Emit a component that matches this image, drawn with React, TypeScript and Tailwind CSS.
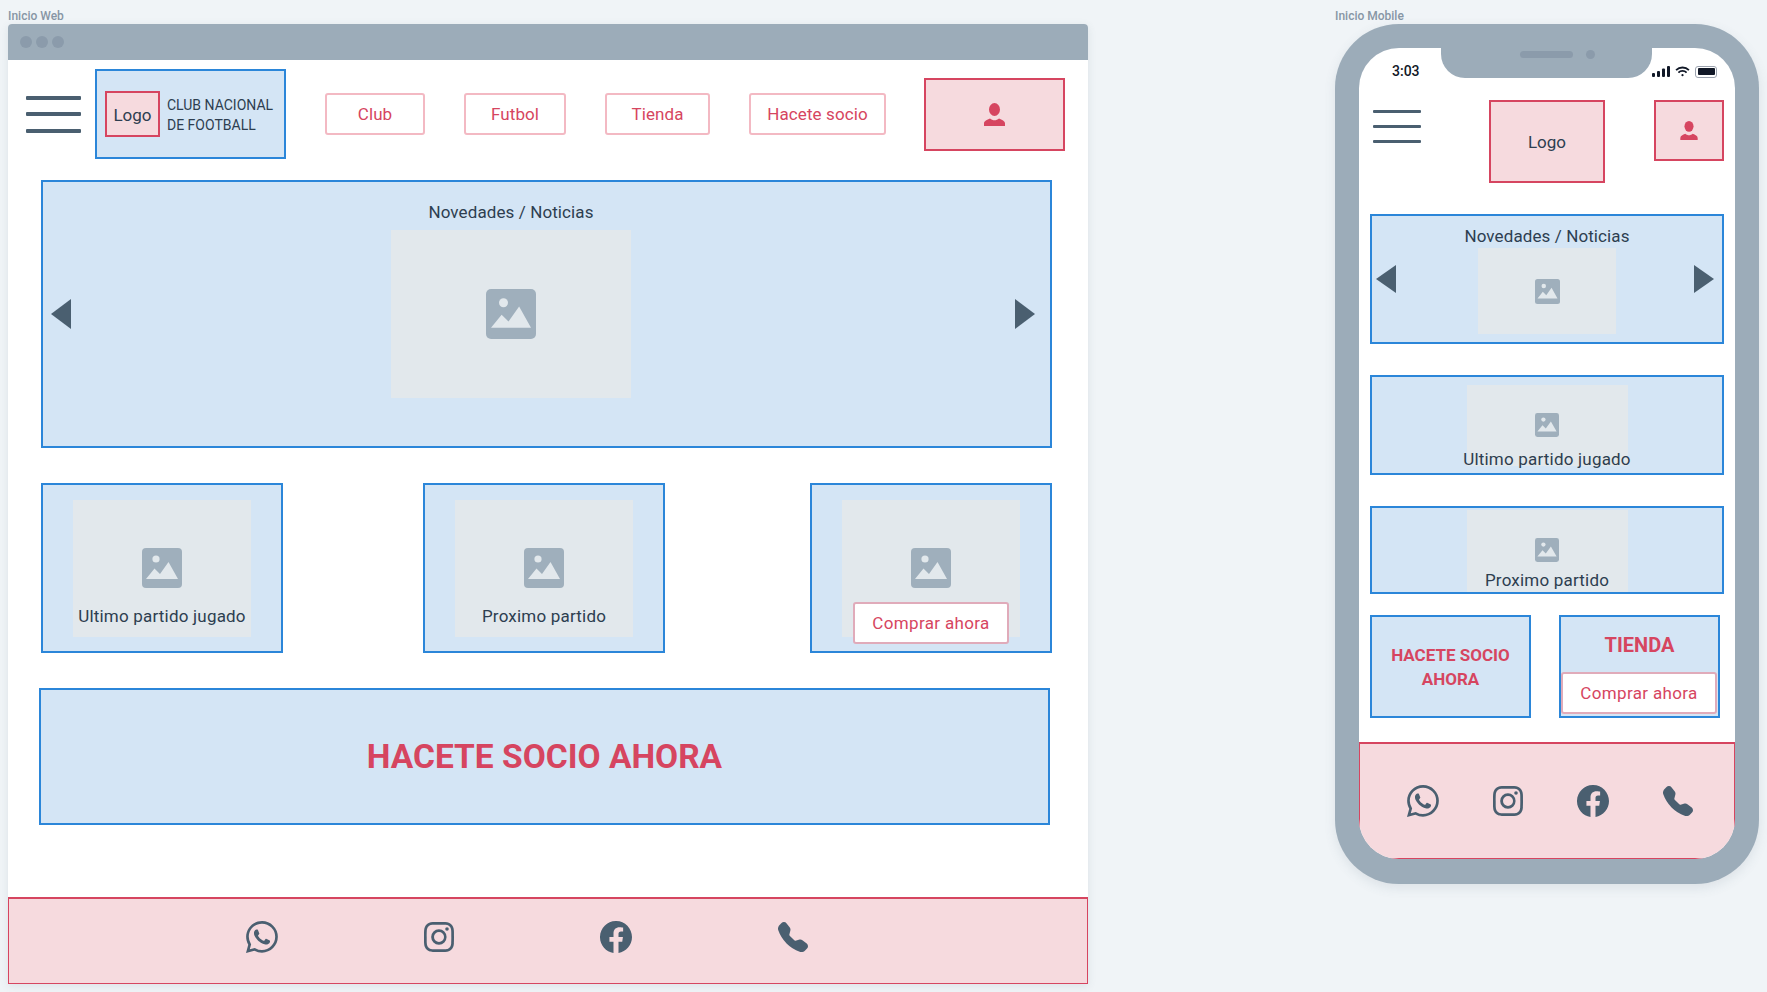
import type { ReactNode } from 'react';
import { BsWhatsapp, BsInstagram, BsFacebook, BsTelephoneFill } from 'react-icons/bs';

function ImageIcon({ className }: { className: string }) {
  return (
    <svg viewBox="0 0 40 40" className={`shrink-0 ${className}`}>
      <rect width="40" height="40" rx="4" fill="#9fafbc" />
      <circle cx="14" cy="11" r="3.6" fill="#e2e8ec" />
      <path d="M4 31l8.500-10.500 5.500 5.500 8.500-12 9.500 17z" fill="#e2e8ec" />
    </svg>
  );
}

function UserIcon({ className }: { className: string }) {
  return (
    <svg viewBox="0 0 21 23" className={className} fill="#d64560">
      <ellipse cx="10.500" cy="6.500" rx="5.500" ry="6.500" />
      <path d="M0 23v-2.500c0-2.500 3-3.700 6-5 1.300 1.200 3 1.800 4.500 1.800s3.200-.6 4.500-1.800c3 1.300 6 2.500 6 5V23z" />
    </svg>
  );
}

function Burger({ className, bar }: { className: string; bar: string }) {
  return (
    <div className={`flex flex-col justify-between ${className}`}>
      <div className={`${bar} bg-[#4a5f70] rounded-[1px]`} />
      <div className={`${bar} bg-[#4a5f70] rounded-[1px]`} />
      <div className={`${bar} bg-[#4a5f70] rounded-[1px]`} />
    </div>
  );
}

function NavButton({ className, children }: { className: string; children: ReactNode }) {
  return (
    <div className={`h-[42px] flex items-center justify-center pt-[2px] bg-white border-2 border-[#f3b9c3] rounded-[3px] text-[17px] tracking-[0.1px] text-[#d64560] ${className}`}>
      {children}
    </div>
  );
}

function BuyButton({ className }: { className: string }) {
  return (
    <div className={`w-[156px] h-[42px] flex items-center justify-center pt-[2px] bg-white border-2 border-[#e0abba] rounded-[3px] text-[17px] tracking-[0.35px] text-[#d64560] ${className}`}>
      Comprar ahora
    </div>
  );
}

function ArrowLeft({ className }: { className: string }) {
  return (
    <svg viewBox="0 0 20 30" className={className} fill="#4a5f70" preserveAspectRatio="none">
      <path d="M20 0v30L0 15z" />
    </svg>
  );
}

function ArrowRight({ className }: { className: string }) {
  return (
    <svg viewBox="0 0 20 30" className={className} fill="#4a5f70" preserveAspectRatio="none">
      <path d="M0 0v30l20-15z" />
    </svg>
  );
}

function SocialIcons({ className }: { className: string }) {
  return (
    <div className={`flex items-center text-[#4a5f70] ${className}`}>
      <div className="w-[32px] h-[32px] flex items-center justify-center">
        <BsWhatsapp className="w-[32px] h-[32px]" />
      </div>
      <div className="w-[32px] h-[32px] flex items-center justify-center">
        <BsInstagram className="w-[30px] h-[30px]" />
      </div>
      <div className="w-[32px] h-[32px] flex items-center justify-center">
        <BsFacebook className="w-[32px] h-[32px]" />
      </div>
      <div className="w-[32px] h-[32px] flex items-center justify-center">
        <BsTelephoneFill className="w-[30px] h-[30px]" />
      </div>
    </div>
  );
}

function WebCard({ className, label, button }: { className: string; label?: string; button?: boolean }) {
  return (
    <div className={`relative w-[242px] h-[170px] bg-[#d4e5f5] border-2 border-[#2b86d9] flex justify-center pt-[15px] ${className}`}>
      <div className="w-[178px] h-[137px] bg-[#e2e8ec] flex flex-col items-center">
        <ImageIcon className="w-[40px] h-[40px] mt-[48px]" />
        {label && <p className="mt-[16px] text-[17px] tracking-[0.2px] leading-[24px] text-[#2d3e50] whitespace-nowrap">{label}</p>}
      </div>
      {button && <BuyButton className="absolute left-[41px] top-[117px]" />}
    </div>
  );
}

function WebFrame() {
  return (
    <section className="w-[1080px] shrink-0 flex flex-col">
      <p className="h-[24px] pt-[9px] text-[12px] font-medium leading-[14px] text-[#8796a5]">Inicio Web</p>
      <div className="h-[960px] flex flex-col bg-white rounded-t-[4px] shadow-[0_2px_8px_rgba(74,95,112,0.12)]">
        <div className="h-[36px] shrink-0 flex items-center gap-[4px] pl-[12px] bg-[#9cacb9] rounded-t-[4px]">
          <span className="w-[12px] h-[12px] rounded-full bg-[#8b9bab]" />
          <span className="w-[12px] h-[12px] rounded-full bg-[#8b9bab]" />
          <span className="w-[12px] h-[12px] rounded-full bg-[#8b9bab]" />
        </div>
        <header className="mt-[9px] h-[90px] flex items-center pl-[18px]">
          <Burger className="w-[55px] h-[37px]" bar="h-[4px]" />
          <div className="ml-[14px] w-[191px] h-[90px] flex items-center bg-[#d4e5f5] border-2 border-[#2b86d9] pl-[8px]">
            <div className="w-[55px] h-[46px] flex items-center justify-center pt-[4px] bg-[#f6dade] border-2 border-[#d64560] text-[17px] text-[#2d3e50]">
              Logo
            </div>
            <p className="ml-[7px] mt-[2px] text-[14px] leading-[20px] text-[#2d3e50] whitespace-nowrap">
              CLUB NACIONAL
              <br />
              DE FOOTBALL
            </p>
          </div>
          <NavButton className="ml-[39px] w-[100px]">Club</NavButton>
          <NavButton className="ml-[39px] w-[102px]">Futbol</NavButton>
          <NavButton className="ml-[39px] w-[105px]">Tienda</NavButton>
          <NavButton className="ml-[39px] w-[137px]">Hacete socio</NavButton>
          <div className="ml-[38px] w-[141px] h-[73px] flex items-center justify-center bg-[#f6dade] border-2 border-[#d64560]">
            <UserIcon className="w-[21px] h-[23px]" />
          </div>
        </header>
        <div className="relative mt-[21px] ml-[33px] w-[1011px] h-[268px] flex items-center justify-between pl-[8px] pr-[15px] bg-[#d4e5f5] border-2 border-[#2b86d9]">
          <ArrowLeft className="w-[20px] h-[30px]" />
          <div className="absolute left-[348px] top-[18px] w-[240px] flex flex-col items-center">
            <p className="text-[17px] tracking-[0.1px] leading-[24px] text-[#2d3e50] whitespace-nowrap">Novedades / Noticias</p>
            <div className="mt-[6px] w-[240px] h-[168px] bg-[#e2e8ec] flex items-center justify-center">
              <ImageIcon className="w-[50px] h-[50px]" />
            </div>
          </div>
          <ArrowRight className="w-[20px] h-[30px]" />
        </div>
        <div className="mt-[35px] ml-[33px] flex">
          <WebCard className="" label="Ultimo partido jugado" />
          <WebCard className="ml-[140px]" label="Proximo partido" />
          <WebCard className="ml-[145px]" button />
        </div>
        <div className="mt-[35px] ml-[31px] w-[1011px] h-[137px] flex items-center justify-center pt-[2px] bg-[#d4e5f5] border-2 border-[#2b86d9]">
          <p className="text-[33.5px] font-bold text-[#d64560] whitespace-nowrap">HACETE SOCIO AHORA</p>
        </div>
        <footer className="mt-[72px] h-[87px] bg-[#f6dade] border border-t-2 border-[#d64560] flex items-start pt-[22px]">
          <SocialIcons className="ml-[237px] gap-[145px]" />
        </footer>
      </div>
    </section>
  );
}

function StatusIcons() {
  return (
    <div className="flex items-center gap-[5px]">
      <svg viewBox="0 0 18 11" className="w-[18px] h-[11px]" fill="#111827">
        <rect x="0" y="7" width="3" height="4" rx="1" />
        <rect x="5" y="5" width="3" height="6" rx="1" />
        <rect x="10" y="2.500" width="3" height="8.500" rx="1" />
        <rect x="15" y="0" width="3" height="11" rx="1" />
      </svg>
      <svg viewBox="0 0 16 12" className="w-[15px] h-[11px]" fill="none" stroke="#111827" strokeWidth="2">
        <path d="M1 4.500a10 10 0 0 1 14 0M3.500 7.200a6.500 6.500 0 0 1 9 0" />
        <circle cx="8" cy="10" r="1.200" fill="#111827" stroke="none" />
      </svg>
      <div className="w-[22px] h-[12px] p-[1.500px] border border-[#9ca3af] rounded-[3px]">
        <div className="w-full h-full bg-[#111827] rounded-[1px]" />
      </div>
    </div>
  );
}

function PhoneFrame() {
  return (
    <section className="ml-[247px] w-[424px] shrink-0 flex flex-col">
      <p className="h-[24px] pt-[9px] text-[12px] font-medium leading-[14px] text-[#8796a5]">Inicio Mobile</p>
      <div className="w-[424px] h-[860px] p-[24px] bg-[#9cacb9] rounded-[64px] shadow-[0_4px_12px_rgba(74,95,112,0.12)]">
        <div className="relative w-[376px] h-[811px] flex flex-col bg-white rounded-[40px] overflow-hidden">
          <div className="absolute left-[82px] top-0 w-[211px] h-[30px] bg-[#9cacb9] rounded-b-[24px] flex items-center self-start gap-[13px] pl-[79px] pb-[18px]">
            <span className="w-[53px] h-[7px] rounded-full bg-[#8b9bab]" />
            <span className="w-[9px] h-[9px] rounded-full bg-[#8b9bab]" />
          </div>
          <div className="h-[52px] shrink-0 flex items-center justify-between pl-[33px] pr-[18px] pb-[5px]">
            <span className="text-[14px] font-medium text-[#111827]">3:03</span>
            <StatusIcons />
          </div>
          <div className="h-[83px] shrink-0 flex items-start pl-[14px]">
            <Burger className="mt-[10px] w-[48px] h-[33px]" bar="h-[3px]" />
            <div className="ml-[68px] w-[116px] h-[83px] flex items-center justify-center pt-[2px] bg-[#f6dade] border-2 border-[#d64560] text-[17px] text-[#2d3e50]">
              Logo
            </div>
            <div className="ml-[49px] w-[70px] h-[61px] flex items-center justify-center bg-[#f6dade] border-2 border-[#d64560]">
              <UserIcon className="w-[18px] h-[19px]" />
            </div>
          </div>
          <div className="relative mt-[31px] ml-[11px] w-[354px] h-[130px] flex items-center justify-between pl-[4px] pr-[8px] bg-[#d4e5f5] border-2 border-[#2b86d9]">
            <ArrowLeft className="w-[20px] h-[28px]" />
            <div className="absolute left-[106px] top-[9px] w-[138px] flex flex-col items-center">
              <p className="text-[17px] tracking-[0.1px] leading-[23px] text-[#2d3e50] whitespace-nowrap">Novedades / Noticias</p>
              <div className="w-[138px] h-[86px] bg-[#e2e8ec] flex items-center justify-center">
                <ImageIcon className="w-[25px] h-[25px]" />
              </div>
            </div>
            <ArrowRight className="w-[20px] h-[28px]" />
          </div>
          <div className="mt-[31px] ml-[11px] w-[354px] h-[100px] flex justify-center bg-[#d4e5f5] border-2 border-[#2b86d9] pt-[8px]">
            <div className="w-[161px] h-[81px] bg-[#e2e8ec] flex flex-col items-center">
              <ImageIcon className="w-[24px] h-[24px] mt-[28px]" />
              <p className="mt-[10px] text-[17px] tracking-[0.2px] leading-[24px] text-[#2d3e50] whitespace-nowrap">Ultimo partido jugado</p>
            </div>
          </div>
          <div className="mt-[31px] ml-[11px] w-[354px] h-[88px] flex justify-center bg-[#d4e5f5] border-2 border-[#2b86d9] pt-[2px]">
            <div className="w-[161px] h-[82px] bg-[#e2e8ec] flex flex-col items-center">
              <ImageIcon className="w-[24px] h-[24px] mt-[28px]" />
              <p className="mt-[6px] text-[17px] tracking-[0.2px] leading-[24px] text-[#2d3e50] whitespace-nowrap">Proximo partido</p>
            </div>
          </div>
          <div className="mt-[21px] ml-[11px] flex">
            <div className="w-[161px] h-[103px] flex items-center justify-center bg-[#d4e5f5] border-2 border-[#2b86d9] text-center text-[17px] leading-[24px] font-bold text-[#d64560]">
              HACETE SOCIO
              <br />
              AHORA
            </div>
            <div className="ml-[28px] w-[161px] h-[103px] flex flex-col items-center bg-[#d4e5f5] border-2 border-[#2b86d9] pt-[14px]">
              <p className="text-[20px] leading-[28px] font-bold text-[#d64560]">TIENDA</p>
              <BuyButton className="mt-[13px] self-start" />
            </div>
          </div>
          <footer className="mt-[24px] h-[117px] bg-[#f6dade] border border-t-2 border-[#d64560] flex items-start pt-[41px]">
            <SocialIcons className="ml-[47px] gap-[53px]" />
          </footer>
        </div>
      </div>
    </section>
  );
}

export default function App() {
  return (
    <div className="w-[1767px] h-[992px] overflow-hidden flex pl-[8px] bg-[#f0f4f7] font-['Roboto',sans-serif]">
      <WebFrame />
      <PhoneFrame />
    </div>
  );
}
